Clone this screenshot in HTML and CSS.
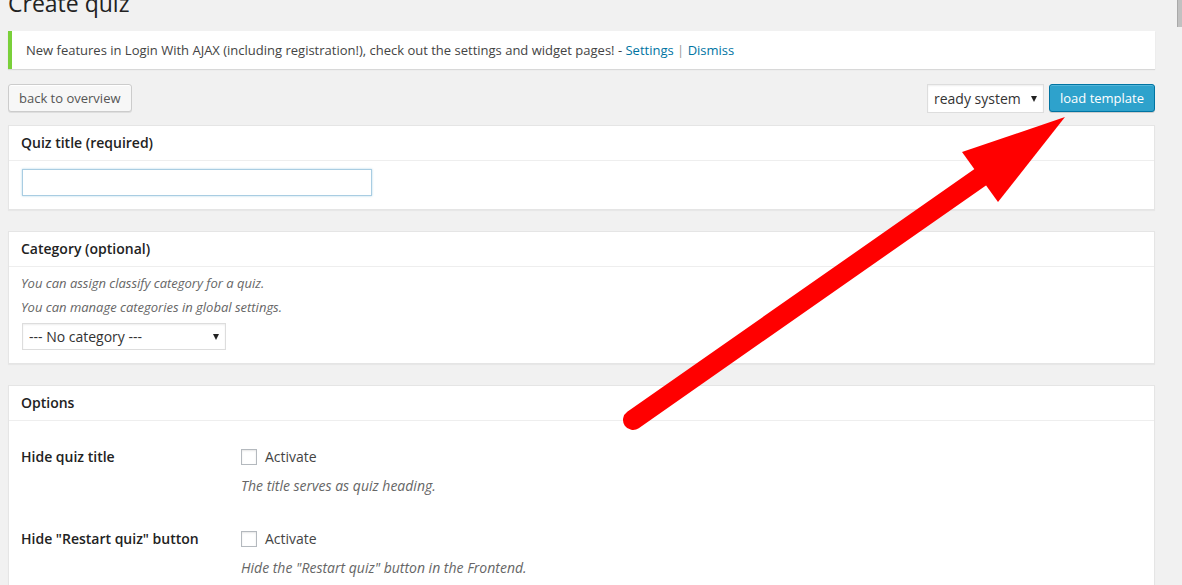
FILE: index.html
```html
<!DOCTYPE html>
<html>

<head>
    <title>Create quiz</title>
    <link rel="stylesheet" href="styles.css">
</head>

<body>

    <div class="wrap">
        <h1 class="page-title">Create quiz</h1>

        <!-- Plugin notice -->
        <div class="notice">
            <p>New features in Login With AJAX (including registration!), check out the settings and widget pages! - <a href="#">Settings</a> <span class="sep">|</span> <a href="#">Dismiss</a></p>
        </div>

        <div class="toolbar">
            <button class="button">back to overview</button>
            <div class="template-load">
                <span class="select-wrap">
                    <select class="template-select">
                        <option>ready system</option>
                    </select>
                </span>
                <button class="button button-primary">load template</button>
            </div>
        </div>

        <div class="postbox">
            <h3 class="hndle">Quiz title (required)</h3>
            <div class="inside">
                <input type="text" class="title-input">
            </div>
        </div>

        <div class="postbox">
            <h3 class="hndle">Category (optional)</h3>
            <div class="inside">
                <p class="description">You can assign classify category for a quiz.</p>
                <p class="description">You can manage categories in global settings.</p>
                <span class="select-wrap">
                    <select class="category-select">
                        <option>--- No category ---</option>
                    </select>
                </span>
            </div>
        </div>

        <div class="postbox">
            <h3 class="hndle">Options</h3>
            <div class="options">
                <div class="option-row">
                    <div class="option-label">Hide quiz title</div>
                    <div>
                        <label class="check"><input type="checkbox"> Activate</label>
                        <p class="option-desc">The title serves as quiz heading.</p>
                    </div>
                </div>
                <div class="option-row">
                    <div class="option-label">Hide "Restart quiz" button</div>
                    <div>
                        <label class="check"><input type="checkbox"> Activate</label>
                        <p class="option-desc">Hide the "Restart quiz" button in the Frontend.</p>
                    </div>
                </div>
            </div>
        </div>
    </div>

    <!-- Red annotation arrow over the page -->
    <svg class="arrow" width="1182" height="585" viewBox="0 0 1182 585">
        <line x1="633" y1="420" x2="982" y2="176" stroke="#ff0000" stroke-width="20" stroke-linecap="round" />
        <polygon points="1065,117 962,152 998,202" fill="#ff0000" />
    </svg>

    <div class="scroll-thumb"></div>

</body>

</html>
```

FILE: styles.css
```css
body { /* Page background and base text */
    margin: 0;
    height: 585px;
    overflow: hidden;
    background: #f1f1f1;
    color: #444;
    font-family: "Open Sans", "Liberation Sans", sans-serif;
    font-size: 13px;
    line-height: 1.4;
}

.wrap { /* Content column */
    margin: 0 27px 0 8px;
}

.page-title { /* Page heading, cut at the top */
    margin: -11px 0 13px;
    font-size: 23px;
    font-weight: 400;
    line-height: 29px;
    color: #222;
}

.notice { /* Green notice bar */
    background: #fff;
    border-left: 4px solid #7ad03a;
    box-shadow: 0 1px 1px 0 rgba(0, 0, 0, 0.1);
    padding: 1px 12px;
}

.notice p {
    margin: 6px 0;
    padding: 2px;
    line-height: 20px;
}

.notice a {
    color: #0074a2;
    text-decoration: none;
}

.notice .sep {
    color: #999;
}

.toolbar { /* Row with buttons above the boxes */
    display: flex;
    justify-content: space-between;
    align-items: flex-start;
    margin: 15px 0 12px;
}

.template-load {
    display: flex;
    gap: 5px;
}

.button { /* Grey button */
    box-sizing: border-box;
    height: 28px;
    margin: 0;
    padding: 0 10px 1px;
    font-family: inherit;
    font-size: 13px;
    line-height: 26px;
    color: #555;
    background: #f7f7f7;
    border: 1px solid #ccc;
    border-radius: 3px;
    box-shadow: inset 0 1px 0 #fff, 0 1px 0 rgba(0, 0, 0, 0.08);
    cursor: pointer;
}

.button-primary { /* Blue button */
    color: #fff;
    background: #2ea2cc;
    border-color: #0074a2;
    box-shadow: inset 0 1px 0 rgba(120, 200, 230, 0.5), 0 1px 0 rgba(0, 0, 0, 0.15);
}

.select-wrap { /* Select with a small black triangle */
    position: relative;
    display: inline-block;
}

.select-wrap::after {
    content: "";
    position: absolute;
    right: 7px;
    top: 50%;
    margin-top: -3px;
    border-left: 3.5px solid transparent;
    border-right: 3.5px solid transparent;
    border-top: 6px solid #222;
    pointer-events: none;
}

.select-wrap select {
    -webkit-appearance: none;
    appearance: none;
    box-sizing: border-box;
    margin: 0;
    padding: 0 20px 0 6px;
    font-family: inherit;
    font-size: 14px;
    color: #333;
    background: #fff;
    border: 1px solid #ddd;
    border-radius: 0;
    box-shadow: inset 0 1px 2px rgba(0, 0, 0, 0.07);
}

.template-select {
    width: 117px;
    height: 29px;
}

.category-select {
    width: 204px;
    height: 27px;
}

.postbox { /* White box with a header */
    background: #fff;
    border: 1px solid #e5e5e5;
    box-shadow: 0 1px 1px rgba(0, 0, 0, 0.04);
    margin-bottom: 21px;
}

.hndle {
    margin: 0;
    padding: 8px 12px;
    font-size: 14px;
    font-weight: 600;
    line-height: 18px;
    color: #222;
    border-bottom: 1px solid #eee;
}

.inside {
    padding: 6px 12px 13px;
}

.inside .select-wrap {
    margin: 2px 0 0 1px;
}

.title-input { /* Focused text field */
    display: block;
    box-sizing: border-box;
    width: 350px;
    height: 27px;
    margin: 2px 0 0 1px;
    border: 1px solid #a9cde2;
    box-shadow: 0 0 2px rgba(30, 140, 190, 0.35);
    outline: none;
}

.description {
    margin: 0 0 4px;
    line-height: 20px;
    font-style: italic;
    color: #666;
}

.options { /* Options table */
    padding: 6px 12px 0;
}

.option-row {
    display: grid;
    grid-template-columns: 220px 1fr;
    padding: 20px 0 13px;
}

.option-label {
    font-size: 14px;
    font-weight: 600;
    line-height: 20px;
    color: #222;
}

.check {
    display: flex;
    align-items: center;
    gap: 8px;
    font-size: 14px;
    line-height: 20px;
    color: #444;
}

.check input {
    -webkit-appearance: none;
    appearance: none;
    width: 16px;
    height: 16px;
    margin: 0;
    background: #fff;
    border: 1px solid #b4b9be;
    box-shadow: inset 0 1px 2px rgba(0, 0, 0, 0.1);
}

.option-desc {
    margin: 9px 0 0;
    font-size: 14px;
    line-height: 20px;
    font-style: italic;
    color: #666;
}

.arrow { /* Annotation on top of everything */
    position: absolute;
    top: 0;
    left: 0;
    pointer-events: none;
}

.scroll-thumb {
    position: absolute;
    top: 0;
    right: 0;
    width: 4px;
    height: 27px;
    background: #c1c1c1;
    border-left: 1px solid #a9a9a9;
}
```
